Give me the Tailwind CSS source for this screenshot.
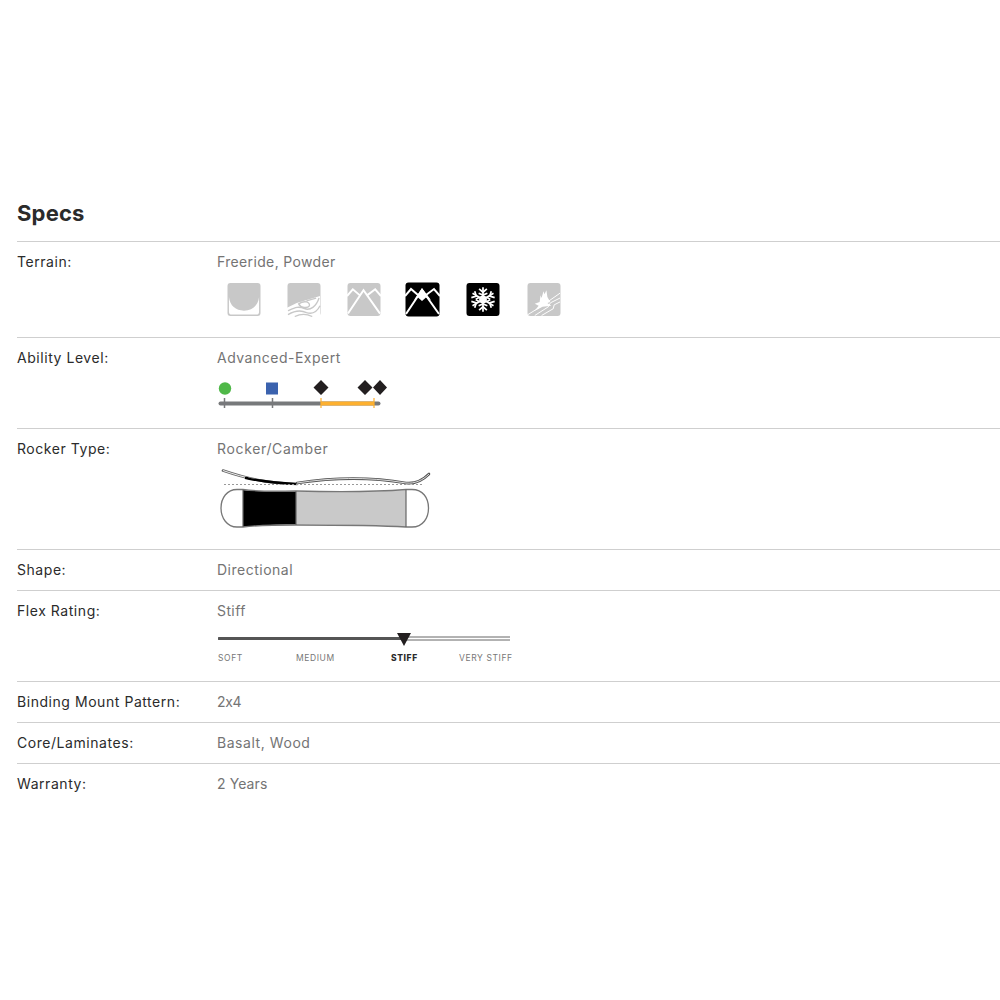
<!DOCTYPE html>
<html>
<head>
    <meta charset="UTF-8">
    <title>Specs</title>
    <script src="https://cdn.jsdelivr.net/npm/@tailwindcss/browser@4"></script>
</head>
<body class="bg-white font-['Inter','Liberation_Sans',sans-serif] [font-feature-settings:'calt'_0]">
    <div class="pt-[200px] pl-[17px]">
        <h2 class="h-[41px] text-[22px] leading-[27px] font-bold tracking-[0.2px] text-[#2b2b2b]">Specs</h2>

        <div class="flex border-t border-[#cfcfcf] h-[96px] pt-[10px]">
            <div class="w-[200px] text-[14px] leading-[19px] tracking-[0.55px] text-[#2b2b2b]">Terrain:</div>
            <div>
                <div class="text-[14px] leading-[19px] tracking-[0.35px] text-[#747474]">Freeride, Powder</div>
                <div class="flex gap-[26px] mt-[11px] ml-[10px]">
                    <!-- halfpipe -->
                    <svg width="34" height="35" viewBox="0 0 35 35">
                        <rect x="0.5" y="0.5" width="34" height="34" rx="3" fill="#c8c8c8"/>
                        <path d="M2 15 C3 24 9 29 17.5 29 C26 29 32 24 33 15 V30 Q33 33 30 33 H5 Q2 33 2 30 Z" fill="#fff"/>
                    </svg>
                    <!-- groomed -->
                    <svg width="34" height="35" viewBox="0 0 35 35">
                        <rect x="0.5" y="0.5" width="34" height="34" rx="3" fill="#c8c8c8"/>
                        <path d="M0 26 L10 21 L34 14 V35 H0 Z" fill="#fff"/>
                        <path d="M1 29 C8 26 12 24 18 27 C24 29 30 25 33 16 M1 33 C8 29 14 28 20 31 C26 33 31 30 34 24 M12 22 C18 18 24 20 23 24 C21 27 14 26 12 22 Z M8 35 C14 32 20 32 26 35 M20 19 L30 16" fill="none" stroke="#c8c8c8" stroke-width="1.4"/>
                    </svg>
                    <!-- all mountain -->
                    <svg width="34" height="35" viewBox="0 0 35 35">
                        <rect x="0.5" y="0.5" width="34" height="34" rx="3" fill="#c8c8c8"/>
                        <path d="M1 32 L17 8 L34 32 M0 14 L6 7 L13 13 M21 13 L29 7 L35 14" fill="none" stroke="#fff" stroke-width="2"/>
                    </svg>
                    <!-- freeride -->
                    <svg class="-ml-[2px]" width="35" height="35" viewBox="0 0 35 35">
                        <rect x="0.5" y="0.5" width="34" height="34" rx="3" fill="#000"/>
                        <path d="M9 18 L17 6 L26 18 L21 15.5 L17 19 L13 15.5 Z" fill="#fff"/>
                        <path d="M1 32 L17 8 L34 32 M0 14 L6 7 L13 13 M21 13 L29 7 L35 14" fill="none" stroke="#fff" stroke-width="2"/>
                    </svg>
                    <!-- powder -->
                    <svg width="34" height="35" viewBox="0 0 35 35">
                        <rect x="0.5" y="0.5" width="34" height="34" rx="3" fill="#000"/>
                        <g stroke="#fff" stroke-width="1.8" fill="none">
                            <path d="M17.5 5 V30 M6.7 11 L28.3 24 M6.7 24 L28.3 11"/>
                            <path d="M13.5 6.5 L17.5 10 L21.5 6.5 M13.5 28.5 L17.5 25 L21.5 28.5 M5.5 15.5 L10.5 14 L9 9 M29.5 15.5 L24.5 14 L26 9 M5.5 19.5 L10.5 21 L9 26 M29.5 19.5 L24.5 21 L26 26"/>
                            <path d="M13 11 L17.5 13 L22 11 M13 24 L17.5 22 L22 24 M10 17.5 L14 15 M10 17.5 L14 20 M25 17.5 L21 15 M25 17.5 L21 20"/>
                        </g>
                        <circle cx="17.5" cy="17.5" r="4" fill="#fff"/>
                    </svg>
                    <!-- backcountry -->
                    <svg class="ml-px" width="34" height="35" viewBox="0 0 35 35">
                        <rect x="0.5" y="0.5" width="34" height="34" rx="3" fill="#c8c8c8"/>
                        <path d="M14 13 L15 16 L17 9 L18 12 L20 8 L21 15 L24 20 L21 21 L25 24 L16 25 L8 29 L12 24 L8 22 L13 20 Z" fill="#fff"/>
                        <path d="M1 33 L14 25 L34 11 M8 34 L22 25 L24 21 L34 16 M15 34 L27 27 L28 23 L34 20" fill="none" stroke="#fff" stroke-width="1"/>
                    </svg>
                </div>
            </div>
        </div>

        <div class="flex border-t border-[#cfcfcf] h-[91px] pt-[10px]">
            <div class="w-[200px] text-[14px] leading-[19px] tracking-[0.55px] text-[#2b2b2b]">Ability Level:</div>
            <div>
                <div class="text-[14px] leading-[19px] tracking-[0.5px] text-[#747474]">Advanced-Expert</div>
                <svg class="block mt-[12px]" width="171" height="32" viewBox="217 379 171 32">
                    <circle cx="225" cy="388.5" r="6.2" fill="#4fb848"/>
                    <rect x="266" y="382.5" width="12" height="12" fill="#3b62ae"/>
                    <path d="M321 380 L328.5 387.5 L321 395 L313.5 387.5 Z M365 380 L372.5 387.5 L365 395 L357.5 387.5 Z M380 380 L387 387.5 L380 395 L373 387.5 Z" fill="#231f20"/>
                    <path d="M220.5 403.5 H378.5" stroke="#77797b" stroke-width="4" stroke-linecap="round"/>
                    <path d="M321 403.5 H374" stroke="#fdb02f" stroke-width="4"/>
                    <path d="M224.5 398 V408 M272.5 398 V408" stroke="#77797b" stroke-width="1.5"/>
                    <path d="M321 398 V408 M374 398 V408" stroke="#fdb02f" stroke-width="1.2"/>
                </svg>
            </div>
        </div>

        <div class="flex border-t border-[#cfcfcf] h-[121px] pt-[10px]">
            <div class="w-[200px] text-[14px] leading-[19px] tracking-[0.55px] text-[#2b2b2b]">Rocker Type:</div>
            <div>
                <div class="text-[14px] leading-[19px] tracking-[0.65px] text-[#747474]">Rocker/Camber</div>
                <svg class="block mt-[9px]" width="216" height="64" viewBox="217 467 216 64">
                    <path d="M223 470.5 C245 478 265 483 297 484" fill="none" stroke="#666" stroke-width="2.6" stroke-linecap="round"/>
                    <path d="M223 470.5 C245 478 265 483 297 484" fill="none" stroke="#fff" stroke-width="0.9"/>
                    <path d="M245 478 C262 482 280 484 297 484 C280 483 262 481 245 478 Z" fill="#000" stroke="#000" stroke-width="1.8"/>
                    <path d="M297 483 C330 478 365 476 406 483 C415 484 423 480 429 474" fill="none" stroke="#555" stroke-width="2.6" stroke-linecap="round"/>
                    <path d="M297 483 C330 478 365 476 406 483 C415 484 423 480 429 474" fill="none" stroke="#fff" stroke-width="0.8"/>
                    <path d="M224 484.5 H424" stroke="#999" stroke-width="1" stroke-dasharray="2 2"/>
                    <path d="M243 490 C260 492 280 491.5 296 491.5 L296 524.5 C280 524.5 260 525 243 527 Z" fill="#000"/>
                    <path d="M296 491.5 C335 492 375 492 406 490 V527 C375 525 335 524.5 296 524.5 Z" fill="#c9c9c9"/>
                    <path d="M243 489.5 C260 492 280 491 296 491 C335 492 375 492 406 489.5 H412 C423 489.5 428.5 498 428.5 508 C428.5 518 423 527 412 527 H406 C375 525 335 525 296 525 C280 525 260 525 243 527 H237 C227 527 221 518 221 508 C221 498 227 489.5 237 489.5 Z" fill="none" stroke="#777" stroke-width="1.3"/>
                    <path d="M243 489.5 V527 M296 491 V525 M406 489.5 V527" stroke="#666" stroke-width="1.2"/>
                </svg>
            </div>
        </div>

        <div class="flex border-t border-[#cfcfcf] h-[41px] pt-[10px]">
            <div class="w-[200px] text-[14px] leading-[19px] tracking-[0.55px] text-[#2b2b2b]">Shape:</div>
            <div class="text-[14px] leading-[19px] tracking-[0.5px] text-[#747474]">Directional</div>
        </div>

        <div class="flex border-t border-[#cfcfcf] h-[91px] pt-[10px]">
            <div class="w-[200px] text-[14px] leading-[19px] tracking-[0.55px] text-[#2b2b2b]">Flex Rating:</div>
            <div class="ml-px">
                <div class="-ml-px text-[14px] leading-[19px] tracking-[0.4px] text-[#747474]">Stiff</div>
                <svg class="block mt-[12px]" width="293" height="15" viewBox="218 631 293 15">
                    <path d="M219 637.5 H403" stroke="#555" stroke-width="3" stroke-linecap="round"/>
                    <path d="M403 636 H510 M403 639 H510" stroke="#666" stroke-width="1"/>
                    <path d="M397 632 H411 L404 645 Z" fill="#231f20"/>
                </svg>
                <div class="flex mt-[5px] text-[8.5px] leading-[12px] tracking-[0.6px] text-[#777]">
                    <span class="w-[78px]">SOFT</span>
                    <span class="w-[95px]">MEDIUM</span>
                    <span class="w-[68px] font-extrabold text-[#2b2b2b]">STIFF</span>
                    <span>VERY STIFF</span>
                </div>
            </div>
        </div>

        <div class="flex border-t border-[#cfcfcf] h-[41px] pt-[10px]">
            <div class="w-[200px] text-[14px] leading-[19px] tracking-[0.55px] text-[#2b2b2b]">Binding Mount Pattern:</div>
            <div class="text-[14px] leading-[19px] tracking-[-0.3px] text-[#747474]">2x4</div>
        </div>

        <div class="flex border-t border-[#cfcfcf] h-[41px] pt-[10px]">
            <div class="w-[200px] text-[14px] leading-[19px] tracking-[0.55px] text-[#2b2b2b]">Core/Laminates:</div>
            <div class="text-[14px] leading-[19px] tracking-[0.55px] text-[#747474]">Basalt, Wood</div>
        </div>

        <div class="flex border-t border-[#cfcfcf] h-[41px] pt-[10px]">
            <div class="w-[200px] text-[14px] leading-[19px] tracking-[0.55px] text-[#2b2b2b]">Warranty:</div>
            <div class="text-[14px] leading-[19px] tracking-[0.1px] text-[#747474]">2 Years</div>
        </div>
    </div>
</body>
</html>
